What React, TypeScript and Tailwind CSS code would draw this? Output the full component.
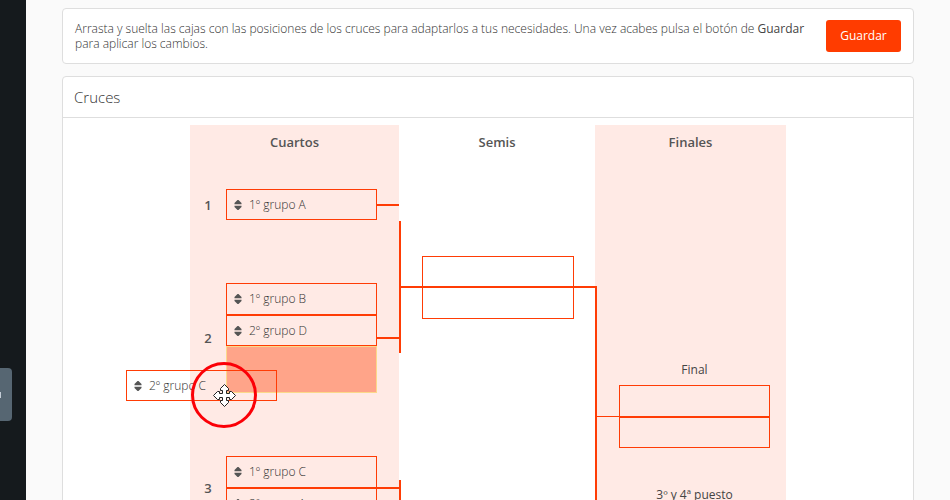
import clsx from "clsx";

function SortIcon() {
  return (
    <svg viewBox="0 0 8 10" className="h-2.5 w-2 shrink-0" fill="#555" aria-hidden="true">
      <path d="M3.5 0H4.5L7.5 3V4.3H.5V3Z" />
      <path d="M3.5 10H4.5L7.5 7V5.7H.5V7Z" />
    </svg>
  );
}

function MoveCursor() {
  return (
    <svg viewBox="0 0 23 23" className="size-[23px]" aria-hidden="true">
      <path
        d="M11.5.5 15.5 4.5V6.5H13.5V9.5H16.5V7.5H18.5L22.5 11.5 18.5 15.5H16.5V13.5H13.5V16.5H15.5V18.5L11.5 22.5 7.5 18.5V16.5H9.5V13.5H6.5V15.5H4.5L.5 11.5 4.5 7.5H6.5V9.5H9.5V6.5H7.5V4.5Z"
        fill="#fff"
        stroke="#222"
      />
    </svg>
  );
}

type SlotProps = { label?: string; className?: string };

function Slot({ label, className }: SlotProps) {
  return (
    <li className={clsx("flex items-center gap-[7px] border border-[#ff3c05] px-[7px]", className)}>
      {label && (
        <>
          <SortIcon />
          <span>{label}</span>
        </>
      )}
    </li>
  );
}

function ColumnTitle({ children }: { children: string }) {
  return <h3 className="pt-2 text-center text-[13px] leading-[18px] font-semibold text-[#555]">{children}</h3>;
}

function Match({ number, children }: { number: number; children: React.ReactNode }) {
  return (
    <div className="flex items-center">
      <span className="w-9 text-center text-[13px] leading-5 font-semibold text-[#555]">{number}</span>
      <ul className="relative w-[151px]">{children}</ul>
      <span className="h-0.5 flex-1 bg-[#ff3c05]" />
    </div>
  );
}

export default function App() {
  return (
    <div className="flex h-screen overflow-hidden bg-[#fafafa] font-['Open_Sans',sans-serif] text-xs font-light text-[#333]">
      <aside className="relative w-[26px] shrink-0 bg-[#151a1d]">
        <button
          aria-label="Abrir menú"
          className="absolute top-[368px] left-0 flex h-[53px] w-3 items-center overflow-hidden rounded-r bg-[#566672]"
        >
          <span className="h-1.5 w-px bg-[#c3ccd6]" />
        </button>
      </aside>

      <main className="flex min-w-0 flex-1 flex-col gap-3 px-9 pt-2">
        <section className="flex items-center justify-between gap-5 rounded border border-[#dedede] bg-white px-3 py-[11px]">
          <p className="leading-[15px]">
            Arrasta y suelta las cajas con las posiciones de los cruces para adaptarlos a tus necesidades. Una vez
            acabes pulsa el botón de <strong className="font-normal text-[#444]">Guardar</strong> para aplicar los
            cambios.
          </p>
          <button className="h-8 w-[75px] shrink-0 rounded-[3px] bg-[#ff3c00] font-normal text-white">Guardar</button>
        </section>

        <section className="shrink-0 rounded border border-[#dedede] bg-white">
          <h2 className="border-b border-[#dedede] px-[11px] text-[15px] leading-10">Cruces</h2>

          <div className="flex justify-center pt-[7px]">
            {/* Cuartos */}
            <div className="w-[209px] bg-[#ffeae5]">
              <ColumnTitle>Cuartos</ColumnTitle>
              <div className="flex flex-col pt-[38px]">
                <Match number={1}>
                  <Slot label="1º grupo A" className="h-[31px]" />
                </Match>
                <div className="h-[63px]" />
                <Match number={2}>
                  <Slot label="1º grupo B" className="h-8" />
                  <Slot label="2º grupo D" className="h-[31px]" />
                  {/* drop target with the box being dragged over it */}
                  <li className="h-[47px] border border-[#fbd98a] bg-[#ffa489]" />
                  <Slot label="2º grupo C" className="absolute top-[87px] -left-[100px] h-[31px] w-[151px]" />
                  <li
                    aria-hidden="true"
                    className="absolute top-[79px] -left-[35px] flex size-[66px] items-center justify-center rounded-full border-3 border-[#fb0007]"
                  >
                    <MoveCursor />
                  </li>
                </Match>
                <div className="h-[63px]" />
                <Match number={3}>
                  <Slot label="1º grupo C" className="h-8" />
                  <Slot label="2º grupo A" className="h-[31px]" />
                </Match>
              </div>
            </div>

            {/* Semis */}
            <div className="w-[196px]">
              <ColumnTitle>Semis</ColumnTitle>
              <div className="flex pt-[70px]">
                <div className="h-[132px] w-0.5 bg-[#ff3c05]" />
                <div className="flex flex-1 items-start pt-[35px]">
                  <span className="mt-[30px] h-0.5 w-[21px] bg-[#ff3c05]" />
                  <ul className="w-[152px]">
                    <Slot className="h-[31px]" />
                    <Slot className="h-8" />
                  </ul>
                  <span className="mt-[30px] h-0.5 flex-1 bg-[#ff3c05]" />
                </div>
              </div>
              <div className="mt-[127px] h-[132px] w-0.5 bg-[#ff3c05]" />
            </div>

            {/* Finales */}
            <div className="w-[191px] bg-[#ffeae5]">
              <ColumnTitle>Finales</ColumnTitle>
              <div className="flex pt-[135px]">
                <div className="h-[260px] w-0.5 bg-[#ff3c05]" />
                <div className="flex-1 pt-[75px]">
                  <h4 className="pl-[6px] text-center leading-[18px] font-normal text-[#444]">Final</h4>
                  <div className="flex items-center pt-[6px]">
                    <span className="h-px w-[22px] bg-[#ff3c05]" />
                    <ul className="w-[151px]">
                      <Slot className="h-8" />
                      <Slot className="h-[31px]" />
                    </ul>
                  </div>
                  <h4 className="pt-[38px] pl-[6px] text-center leading-[18px] font-normal text-[#444]">
                    3º y 4ª puesto
                  </h4>
                </div>
              </div>
            </div>
          </div>
        </section>
      </main>
    </div>
  );
}
